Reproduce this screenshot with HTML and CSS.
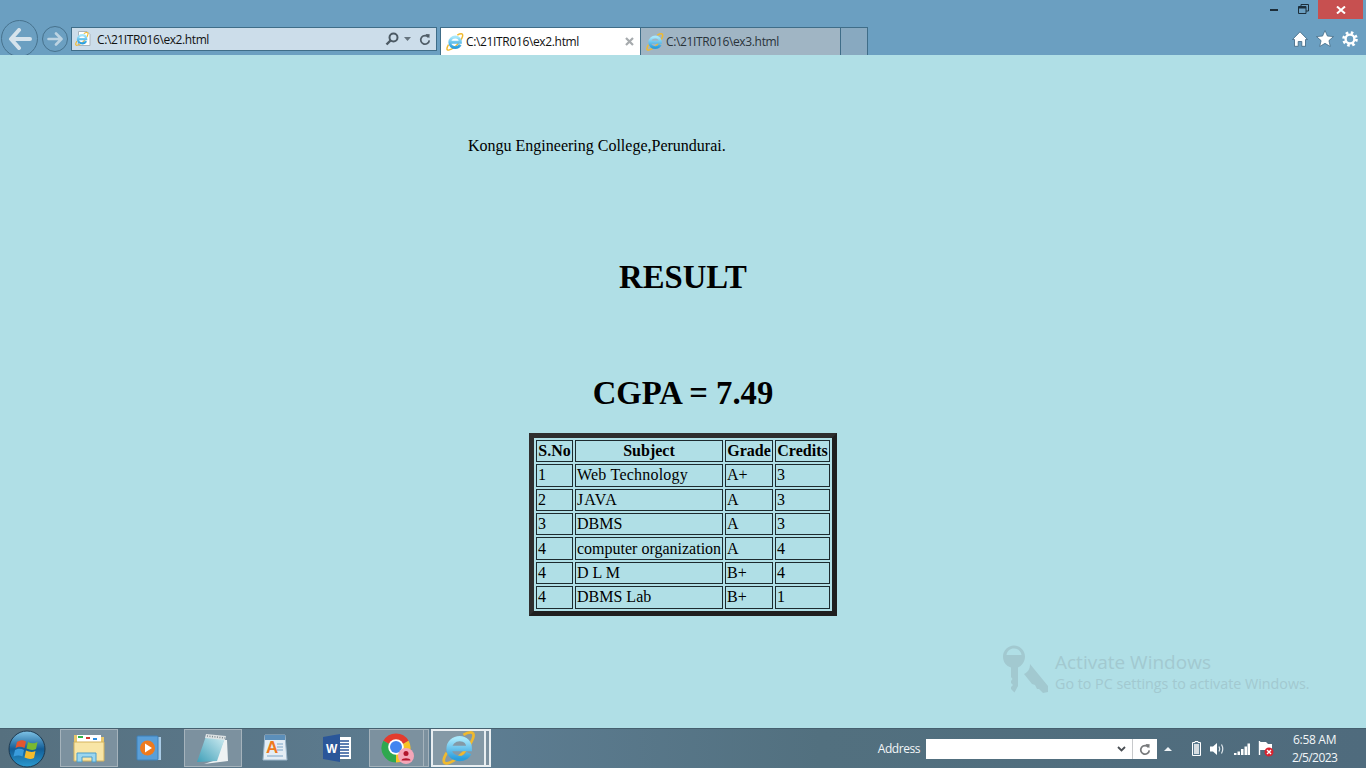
FILE: index.html
```html
<!DOCTYPE html>
<html lang="en">
<head>
<meta charset="utf-8">
<title>C:\21ITR016\ex2.html</title>
<link rel="stylesheet" href="styles.css">
</head>
<body>
<svg class="defs" width="0" height="0" aria-hidden="true">
  <defs>
    <linearGradient id="ieblue" x1="0" y1="0" x2="0" y2="1"><stop offset="0" stop-color="#a8e8fb"/><stop offset="1" stop-color="#2b9edd"/></linearGradient>
    <linearGradient id="orbg" x1="0" y1="0" x2="0" y2="1"><stop offset="0" stop-color="#7fc3e6"/><stop offset=".5" stop-color="#135d96"/><stop offset="1" stop-color="#2a9ad0"/></linearGradient>
    <linearGradient id="padg" x1="1" y1="0" x2="0" y2="1"><stop offset="0" stop-color="#d3eef3"/><stop offset="1" stop-color="#3f9fb8"/></linearGradient>
    <symbol id="ie" viewBox="0 0 20 20">
      <path d="M2.800 12.800C.2 17 .6 19.400 3 19C6.200 18.500 11.600 14.500 15.200 9.600C18.800 4.800 19.800 .8 16.800 .8C15.600 .8 14.200 1.300 12.600 2.300" fill="none" stroke="#f0b92e" stroke-width="1.600"/>
      <path d="M4.500 10.300H16C16 6.800 13.600 4.500 10.400 4.500C7 4.500 4.200 7 4.200 10.400C4.200 13.800 7 16.200 10.400 16.200C12.800 16.200 14.800 15 15.800 13" fill="none" stroke="url(#ieblue)" stroke-width="3.200"/>
    </symbol>
    <symbol id="reload" viewBox="0 0 14 14">
      <path d="M11 4.400A5 5 0 1 0 12 8" fill="none" stroke="currentColor" stroke-width="2"/>
      <path d="M7.500 .5L12.500 .8L12 5.500Z" fill="currentColor"/>
    </symbol>
  </defs>
</svg>
<div class="screen">
  <header class="chrome">
    <div class="caption">
      <svg class="ctl-min" width="10" height="3" viewBox="0 0 10 3"><rect width="8" height="2" y="1" fill="#1d2e3a"/></svg>
      <svg class="ctl-max" width="11" height="10" viewBox="0 0 11 10"><path d="M3 2.500V.5H10.500V7H8M.5 2.500H8V9.500H.5Z" fill="none" stroke="#1d2e3a"/><rect x=".5" y="2.500" width="7.500" height="2" fill="#1d2e3a"/></svg>
      <div class="ctl-close"><svg width="10" height="8" viewBox="0 0 10 8"><path d="M1 .5L9 7.500M9 .5L1 7.500" stroke="#fff" stroke-width="2"/></svg></div>
    </div>
    <div class="toolbar">
      <div class="nav-back">
        <svg width="24" height="22" viewBox="0 0 24 22"><path d="M11 2L3 11L11 20M3.500 11H22" fill="none" stroke="#d5e3ec" stroke-width="4" stroke-linejoin="round" stroke-linecap="round"/></svg>
      </div>
      <div class="nav-fwd">
        <svg width="16" height="14" viewBox="0 0 16 14"><path d="M9 1.500L14.500 7L9 12.500M14 7H1.500" fill="none" stroke="#bcd3e2" stroke-width="2.600" stroke-linejoin="round" stroke-linecap="round"/></svg>
      </div>
      <div class="addr">
        <svg class="addr-icon" width="16" height="16" viewBox="0 0 16 16"><path d="M3.500 .5H12L15 3.500V14.500H3.500Z" fill="#fff" stroke="#a9b4bd"/><use href="#ie" x="0" y="1" width="14" height="14"/></svg>
        <span class="addr-text">C:\21ITR016\ex2.html</span>
        <svg class="addr-search" width="14" height="14" viewBox="0 0 14 14"><circle cx="8.500" cy="5.500" r="4" fill="none" stroke="#4c5a64" stroke-width="2"/><path d="M5.500 8.500L1.500 12.500" stroke="#4c5a64" stroke-width="2.400"/></svg>
        <svg class="addr-drop" width="7" height="4" viewBox="0 0 7 4"><path d="M0 0H7L3.500 4Z" fill="#66747e"/></svg>
        <svg class="addr-reload" width="12" height="13"><use href="#reload" width="12" height="13"/></svg>
      </div>
      <div class="tabs">
        <div class="tab tab-active">
          <svg class="tab-icon" width="18" height="18"><use href="#ie" width="18" height="18"/></svg>
          <span class="tab-text">C:\21ITR016\ex2.html</span>
          <svg class="tab-x" width="9" height="9" viewBox="0 0 9 9"><path d="M1 1L8 8M8 1L1 8" stroke="#a6aaad" stroke-width="2.200"/></svg>
        </div>
        <div class="tab tab-idle">
          <svg class="tab-icon" width="18" height="18"><use href="#ie" width="18" height="18"/></svg>
          <span class="tab-text">C:\21ITR016\ex3.html</span>
        </div>
        <div class="tab-new"></div>
      </div>
      <div class="tools">
        <svg width="16" height="16" viewBox="0 0 16 16"><path d="M8 .8L15.500 8.500H13.500V15.300H9.800V10.500H6.200V15.300H2.500V8.500H.5Z" fill="#fff" stroke="#3d6580" stroke-width=".8"/></svg>
        <svg width="18" height="17" viewBox="0 0 17 16"><path d="M8.500 .5L10.800 5.700L16.500 6.200L12.200 10L13.500 15.500L8.500 12.600L3.500 15.500L4.800 10L.5 6.200L6.200 5.700Z" fill="#fff" stroke="#3d6580" stroke-width=".7"/></svg>
        <svg width="16" height="16" viewBox="0 0 16 16"><circle cx="8" cy="8" r="6.300" fill="none" stroke="#fff" stroke-width="3" stroke-dasharray="2.500 2.450"/><circle cx="8" cy="8" r="4.400" fill="none" stroke="#fff" stroke-width="2.400"/></svg>
      </div>
    </div>
  </header>

  <main class="page">
    <p class="college">Kongu Engineering College,Perundurai.</p>
    <h1 class="result">RESULT</h1>
    <h1 class="cgpa">CGPA = 7.49</h1>
    <table class="marks">
      <colgroup><col class="c1"><col class="c2"><col class="c3"><col class="c4"></colgroup>
      <tr><th>S.No</th><th>Subject</th><th>Grade</th><th>Credits</th></tr>
      <tr class="tall lift"><td>1</td><td class="wide">Web Technology</td><td>A+</td><td>3</td></tr>
      <tr><td>2</td><td class="wider">JAVA</td><td>A</td><td>3</td></tr>
      <tr><td>3</td><td>DBMS</td><td>A</td><td>3</td></tr>
      <tr class="tall"><td>4</td><td>computer organization</td><td>A</td><td>4</td></tr>
      <tr><td>4</td><td>D L M</td><td>B+</td><td>4</td></tr>
      <tr class="tall lift"><td>4</td><td>DBMS Lab</td><td>B+</td><td>1</td></tr>
    </table>
    <div class="watermark">
      <svg class="wm-key" width="48" height="52" viewBox="0 0 48 52">
        <path d="M28 19L46 41L46 47L41 48L37 44L35 44L33 40L30 39L22 29C26 27 28 24 28 19Z" fill="#a2c9d0"/>
        <path d="M12 .5C18 .5 23 5.500 23 11.500C23 17 19.500 21 16 22.500V41L12.500 47.500L9 44V42L11 40L9 38V36L10.500 34L9 32V22.500C4 21 1 17 1 11.500C1 5.500 6 .5 12 .5Z" fill="#a2c9d0"/>
        <path d="M4.500 10C5 6 8 3.500 12 3.500C16 3.500 19 6 19.500 10Z" fill="#b0dfe6"/>
      </svg>
      <div class="wm-text">
        <div class="wm-title">Activate Windows</div>
        <div class="wm-sub">Go to PC settings to activate Windows.</div>
      </div>
    </div>
  </main>

  <footer class="taskbar">
    <div class="orb-slot">
      <svg width="38" height="38" viewBox="0 0 38 38">
        <circle cx="19" cy="19" r="18" fill="url(#orbg)" stroke="#1e3a50"/>
        <path d="M9 12C13 9.500 15 10 18 11.500L16.500 18C13.500 16.500 11 16 7.500 18Z" fill="#e2562f"/>
        <path d="M20 12C23 13.500 26 14 29.500 12L28 19C25 20.500 22 20 18.500 18.500Z" fill="#79b92f"/>
        <path d="M7 20C10.500 18 13.500 18.500 16 20L14.500 26.500C11.500 25 9 25 5.500 26.500Z" fill="#3a9cdc"/>
        <path d="M18 20.500C21 22 24.500 22.500 27.500 21L26 28C23 29.500 20 29 16.500 27.500Z" fill="#f5bb2c"/>
      </svg>
    </div>
    <div class="tb-btn tb-explorer">
      <svg width="34" height="32" viewBox="0 0 34 32">
        <path d="M2 3H14L16 5H32V28H2Z" fill="#e8c76d"/>
        <rect x="5" y="3" width="24" height="9" fill="#fff"/>
        <rect x="6" y="4" width="5" height="2" fill="#2eb34a"/><rect x="14" y="5" width="4" height="2" fill="#d13b32"/><rect x="21" y="6" width="4" height="2" fill="#2a8be0"/>
        <path d="M2 10H32V29H2Z" fill="#f8e5a6" stroke="#d4b35c"/>
        <path d="M5 30V21H12H24V30H20V25H10V30Z" fill="#9ad6f0" stroke="#4b9cc9"/>
      </svg>
    </div>
    <div class="tb-btn tb-plain tb-media">
      <svg width="28" height="28" viewBox="0 0 28 28">
        <rect x="6" y="3" width="20" height="23" fill="#a9cbe6"/>
        <rect x="2" y="2" width="21" height="24" rx="1" fill="#5a9fd8" stroke="#3f82ba"/>
        <circle cx="12.500" cy="14" r="7.500" fill="#ee7a1e"/>
        <path d="M10 9.500L17 14L10 18.500Z" fill="#fff"/>
      </svg>
    </div>
    <div class="tb-btn tb-notepad">
      <svg width="34" height="32" viewBox="0 0 34 32">
        <path d="M20 28L28 8H31L32 29L8 32Z" fill="#eef2f3"/>
        <path d="M10 4L29 6L21 29L1 30Z" fill="url(#padg)"/>
        <path d="M10 2L30 4L29 8L9 6Z" fill="#dde2e4"/>
        <path d="M11 4L29 6" stroke="#7f8c92" stroke-width="1.500" stroke-dasharray="1 1.500"/>
      </svg>
    </div>
    <div class="tb-btn tb-plain tb-wordpad">
      <svg width="26" height="30" viewBox="0 0 26 30">
        <path d="M1 27L3 2H23L25 27Z" fill="#e4edf5" stroke="#9cb7cc"/>
        <rect x="3" y="2" width="20" height="5" fill="#5c8fba"/>
        <text class="wp-a" x="4" y="20">A</text>
        <path d="M15 11H21M15 14H21M15 17H21M5 23H21" stroke="#7da6c7" stroke-width="1.200"/>
      </svg>
    </div>
    <div class="tb-btn tb-plain tb-word">
      <svg width="30" height="30" viewBox="0 0 30 30">
        <rect x="14" y="4" width="15" height="22" fill="#fff"/>
        <path d="M17 8H27M17 11H27M17 14H27M17 17H27M17 20H27M17 23H27" stroke="#2a5699" stroke-width="1.300"/>
        <path d="M1 4L18 1V29L1 26Z" fill="#2a5699"/>
        <text class="wd-w" x="4" y="20">W</text>
      </svg>
    </div>
    <div class="tb-group tb-chrome">
      <div class="tb-btn tb-chrome-main">
        <svg width="36" height="34" viewBox="0 0 36 34">
          <path d="M17 17L4.440 9.750A14.500 14.500 0 0 1 29.560 9.750Z" fill="#e33b2e"/>
          <path d="M17 17L29.560 9.750A14.500 14.500 0 0 1 17 31.500Z" fill="#f7c325"/>
          <path d="M17 17L17 31.500A14.500 14.500 0 0 1 4.440 9.750Z" fill="#2fa84f"/>
          <circle cx="17" cy="16" r="7.800" fill="#fff"/>
          <circle cx="17" cy="16" r="6" fill="#4285f0"/>
          <circle cx="27" cy="25" r="8" fill="#f5a6b8"/>
          <circle cx="27" cy="22.500" r="2.500" fill="#b3152c"/>
          <path d="M22.500 29.500C22.500 26.500 31.500 26.500 31.500 29.500Z" fill="#b3152c"/>
        </svg>
      </div>
      <div class="tb-sliver"></div>
    </div>
    <div class="tb-group tb-ie">
      <div class="tb-btn tb-ie-main">
        <svg width="34" height="34"><use href="#ie" width="34" height="34"/></svg>
      </div>
      <div class="tb-sliver tb-sliver-ie"></div>
    </div>
    <div class="tb-fill"></div>
    <span class="tb-addr-label">Address</span>
    <div class="tb-addr">
      <svg class="tb-chev" width="9" height="6" viewBox="0 0 9 6"><path d="M1 1L4.500 4.500L8 1" fill="none" stroke="#4a4f54" stroke-width="1.800"/></svg>
      <div class="tb-reload"><svg width="12" height="13"><use href="#reload" width="12" height="13"/></svg></div>
    </div>
    <div class="tray">
      <svg class="tray-up" width="8" height="4" viewBox="0 0 8 4"><path d="M0 4L4 0L8 4Z" fill="#eef3f6"/></svg>
      <svg class="tray-batt" width="9" height="15" viewBox="0 0 9 15"><path d="M3 .5H6V1.500H8.500V14.500H.5V1.500H3Z" fill="#5a7a8f" stroke="#fff"/><rect x="2" y="3" width="5" height="10" fill="#d6dde2"/></svg>
      <svg class="tray-vol" width="15" height="14" viewBox="0 0 15 14"><path d="M0 4.500H3L7 1V13L3 9.500H0Z" fill="#fff"/><path d="M9 4.500Q10.500 7 9 9.500M11.500 2.500Q14 7 11.500 11.500" fill="none" stroke="#dfe7ec" stroke-width="1.200"/></svg>
      <svg class="tray-sig" width="16" height="12" viewBox="0 0 16 12"><path d="M0 10H2.500V12H0ZM3.500 8.500H6V12H3.500ZM7 6H9.500V12H7ZM10.500 3.500H13V12H10.500ZM13.500 0.500H16V12H13.500Z" fill="#fff"/></svg>
      <svg class="tray-flag" width="16" height="16" viewBox="0 0 16 16"><path d="M1.500 0V14" stroke="#fff" stroke-width="1.400"/><path d="M2 1H8L10 3H14V9H2Z" fill="#fff"/><circle cx="11" cy="11" r="4.500" fill="#d8232f"/><path d="M9 9L13 13M13 9L9 13" stroke="#fff" stroke-width="1.400"/></svg>
      <div class="clock"><div>6:58 AM</div><div class="clock-date">2/5/2023</div></div>
    </div>
  </footer>
</div>
</body>
</html>
```
FILE: styles.css
```css
* { box-sizing: border-box; }
html, body { margin: 0; padding: 0; }
body { width: 1366px; height: 768px; overflow: hidden; font-family: "Liberation Serif", "Times New Roman", serif; }
.defs { position: absolute; }
.screen { width: 1366px; height: 768px; display: flex; flex-direction: column; background: #b0dfe6; }

/* Browser chrome */
.chrome { height: 55px; flex: none; background: #6b9fc1; display: flex; flex-direction: column; font-family: "Open Sans", "Noto Sans", sans-serif; font-size: 12px; overflow: hidden; }
.caption { height: 27px; flex: none; display: flex; justify-content: flex-end; align-items: flex-start; padding-right: 3px; }
.ctl-min { margin: 8px 18px 0 0; display: block; }
.ctl-max { margin: 4px 9px 0 0; display: block; }
.ctl-close { width: 45px; height: 19px; background: #c75050; display: flex; align-items: center; justify-content: center; }
.toolbar { height: 28px; flex: none; display: flex; align-items: flex-start; position: relative; padding-left: 71px; }
.nav-back { position: absolute; left: 1px; top: -7px; width: 37px; height: 37px; border-radius: 50%; border: 1px solid #47728d; display: flex; align-items: center; justify-content: center; }
.nav-fwd { position: absolute; left: 42px; top: -1px; width: 26px; height: 26px; border-radius: 50%; border: 1px solid #47728d; display: flex; align-items: center; justify-content: center; }
.addr { width: 366px; height: 24px; background: #ccddea; border: 1px solid #3f6d88; display: flex; align-items: center; padding: 0 5px 0 3px; color: #111; }
.addr-icon { flex: none; }
.addr-text { margin-left: 6px; flex: 1; white-space: nowrap; letter-spacing: -.4px; }
.addr-search { margin-right: 5px; }
.addr-drop { margin-right: 8px; }
.addr-reload { color: #4f5c66; }
.tabs { margin-left: 3px; height: 28px; display: flex; }
.tab { width: 200px; height: 28px; display: flex; align-items: center; padding: 0 5px; border: 1px solid #3f6d88; border-bottom: 0; }
.tab-active { background: #fff; color: #111; border-left-color: #3f6d88; border-right: 0; }
.tab-idle { background: #a0b5c4; color: #29333a; border-right: 0; }
.tab-new { width: 28px; height: 28px; background: #88a9c0; border: 1px solid #3f6d88; border-bottom: 0; }
.tab-icon { flex: none; margin-right: 2px; }
.tab-text { flex: 1; white-space: nowrap; letter-spacing: -.35px; }
.tab-x { margin-right: 1px; }
.tools { position: absolute; right: 8px; top: 3px; display: flex; gap: 8px; align-items: center; }

/* Page content */
.page { flex: 1; position: relative; padding-top: 82px; overflow: hidden; background: #b0dfe6; color: #000; }
.college { margin: 0 0 0 468px; font-size: 16px; line-height: 18px; white-space: nowrap; }
.result, .cgpa { margin: 0; text-align: center; font-size: 32.700px; line-height: 37px; font-weight: 700; }
.result { margin-top: 104px; }
.cgpa { margin-top: 79px; }
.marks { margin: 21px auto 0; width: 308px; table-layout: fixed; border-collapse: separate; border-spacing: 2px; border-width: 5px; border-style: solid; border-color: #2e2e2e #1f1f1f #1f1f1f #2e2e2e; font-size: 16px; }
.c1 { width: 37px; }
.c2 { width: 148px; }
.c3 { width: 48px; }
.c4 { width: 55px; }
.marks th, .marks td { height: 22px; padding: 0 1px; border: 1px solid #1c2a2e; white-space: nowrap; line-height: 18px; overflow: visible; }
.marks th { font-weight: 700; text-align: center; }
.marks td { text-align: left; }
.marks .tall td { height: 23px; }
.marks .lift td { padding-bottom: 2px; }
.marks td.wide { letter-spacing: .22px; }
.marks td.wider { letter-spacing: 1px; }
.watermark { position: absolute; left: 1002px; top: 590px; display: flex; align-items: flex-start; color: #a2c9d0; font-family: "Open Sans", "Noto Sans", sans-serif; white-space: nowrap; }
.wm-key { display: block; flex: none; }
.wm-text { margin: 4px 0 0 5px; }
.wm-title { font-size: 19px; line-height: 26px; }
.wm-sub { font-size: 14.300px; line-height: 18px; }

/* Taskbar */
.taskbar { height: 40px; flex: none; display: flex; align-items: stretch; background: linear-gradient(90deg, #56707f 0, #5d7d92 35%, #52707f 60%, #4f6b7d 100%); border-top: 1px solid #45606f; font-family: "Open Sans", "Noto Sans", sans-serif; color: #f2f6f8; }
.orb-slot { width: 60px; flex: none; display: flex; align-items: center; padding: 0 0 0 8px; }
.tb-btn { flex: none; display: flex; align-items: center; justify-content: center; }
.tb-explorer, .tb-notepad { width: 58px; margin: 0; height: 38px; background: #7c919f; border: 1px solid #a5b3bc; }
.tb-plain { height: 38px; }
.tb-media { width: 58px; margin: 0 6px 0 2px; }
.tb-wordpad { width: 58px; margin-left: 4px; }
.tb-word { width: 65px; margin-right: 0; }
.tb-group { display: flex; flex: none; height: 38px; }
.tb-chrome-main { width: 55px; height: 38px; background: #7c919f; border: 1px solid #a5b3bc; }
.tb-sliver { width: 5px; height: 38px; background: #7c919f; border: 1px solid #a5b3bc; border-left: 0; }
.tb-ie { margin-left: 2px; }
.tb-ie-main { width: 55px; height: 38px; background: #8499a6; border: 2px solid #e8eef1; }
.tb-sliver-ie { border: 2px solid #e8eef1; border-left: 0; }
.tb-fill { flex: 1; }
.tb-addr-label { font-size: 12px; line-height: 40px; margin-right: 6px; letter-spacing: -.45px; }
.tb-addr { width: 231px; height: 20px; margin-top: 10px; background: #fff; display: flex; align-items: center; justify-content: flex-end; color: #77797b; }
.tb-chev { margin-right: 6px; }
.tb-reload { width: 25px; height: 20px; border-left: 1px solid #c7c9cb; display: flex; align-items: center; justify-content: center; }
.tray { width: 209px; display: flex; align-items: center; flex: none; }
.tray-up { margin-left: 7px; }
.tray-batt { margin-left: 20px; }
.tray-vol { margin-left: 9px; }
.tray-sig { margin-left: 9px; }
.tray-flag { margin-left: 8px; }
.clock { margin-left: 18px; text-align: center; font-size: 12px; line-height: 18px; letter-spacing: -.3px; white-space: nowrap; }
.clock-date { letter-spacing: -.6px; }
.wp-a { font-family: "Liberation Sans", sans-serif; font-weight: 700; font-size: 17px; fill: #ee7a1e; }
.wd-w { font-family: "Liberation Sans", sans-serif; font-weight: 700; font-size: 12px; fill: #fff; }
```
